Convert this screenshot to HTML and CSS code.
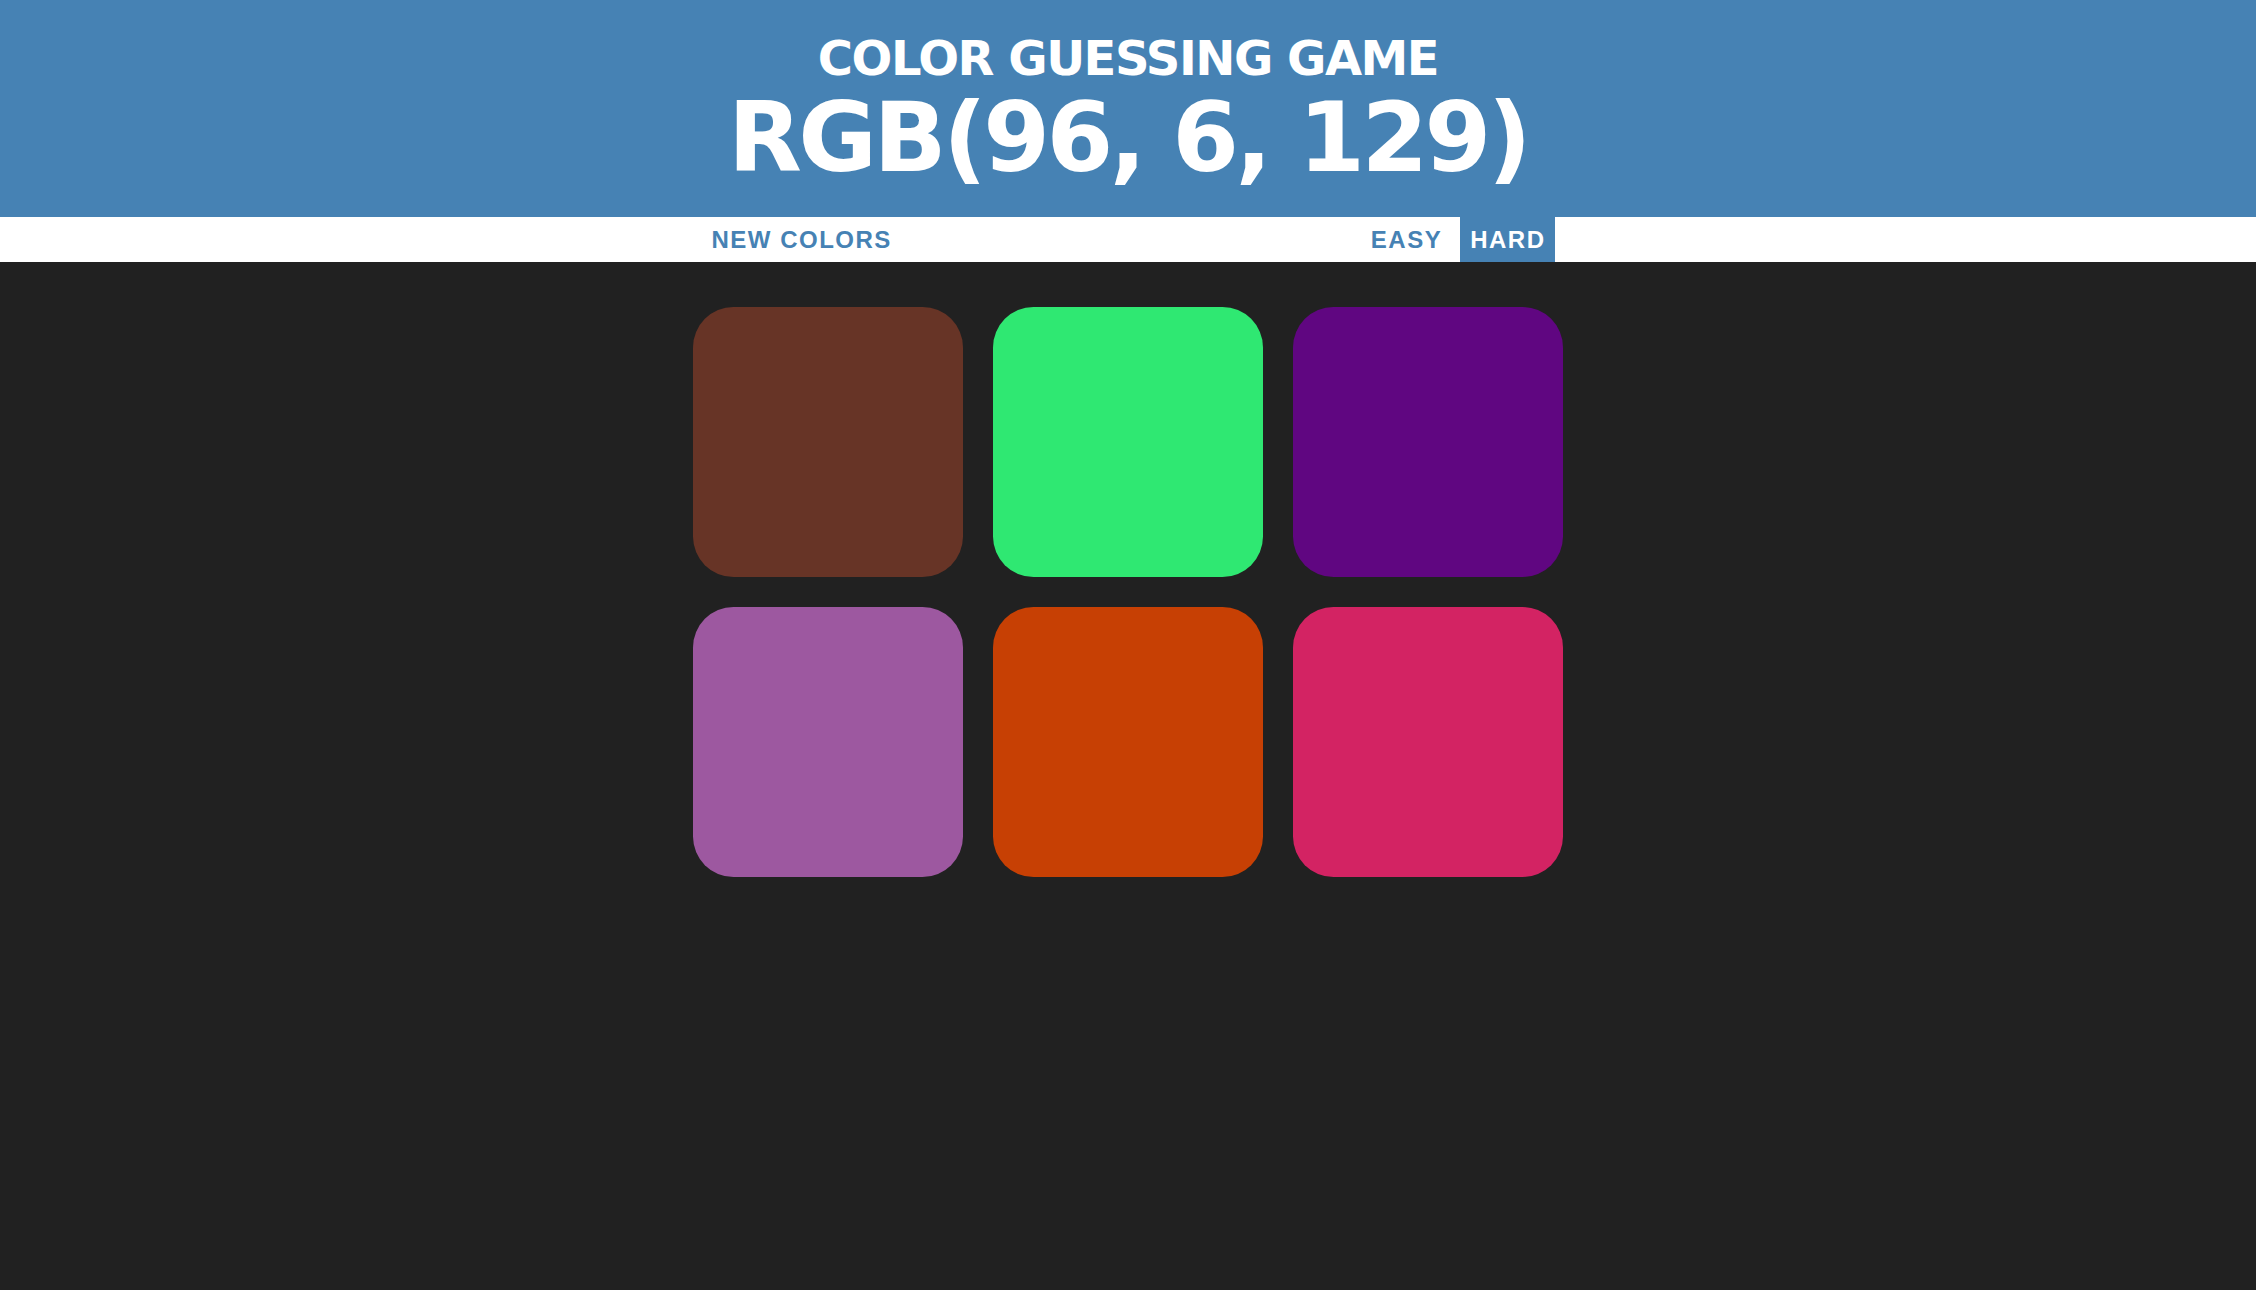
FILE: index.html
```html
<!DOCTYPE html>
<html lang="en">
<head>
<meta charset="utf-8">
<title>Color Guessing Game</title>
<link rel="stylesheet" href="styles.css">
</head>
<body>
  <header class="banner">
    <div class="title">Color Guessing Game</div>
    <div class="color-display">RGB(96, 6, 129)</div>
  </header>
  <nav class="stripe">
    <div class="stripe-inner">
      <button class="btn">New Colors</button>
      <div class="modes">
        <button class="btn">Easy</button>
        <button class="btn selected">Hard</button>
      </div>
    </div>
  </nav>
  <main class="board">
    <div class="square sq-brown"></div>
    <div class="square sq-green"></div>
    <div class="square sq-purple"></div>
    <div class="square sq-lilac"></div>
    <div class="square sq-orange"></div>
    <div class="square sq-pink"></div>
  </main>
</body>
</html>
```

FILE: styles.css
```css
html, body {
  margin: 0;
  padding: 0;
}
body {
  background: #212121;
  min-height: 1290px;
  font-family: "DejaVu Sans", Verdana, sans-serif;
}
.banner {
  background: #4682b4;
  color: #ffffff;
  text-align: center;
  text-transform: uppercase;
  font-weight: bold;
  padding: 32px 0 26px;
}
.title {
  font-size: 48px;
  line-height: 53px;
  letter-spacing: -1.5px;
}
.color-display {
  font-size: 96px;
  line-height: 106px;
  letter-spacing: -3.6px;
}
.stripe {
  background: #ffffff;
  height: 45px;
}
.stripe-inner {
  width: 853px;
  height: 100%;
  margin: 0 auto;
  display: flex;
  justify-content: space-between;
  align-items: stretch;
}
.modes {
  display: flex;
  gap: 9px;
}
.btn {
  border: none;
  background: none;
  margin: 0;
  padding: 0 9px 0 10px;
  height: 100%;
  font-family: "Liberation Sans", Arial, sans-serif;
  font-size: 24px;
  font-weight: bold;
  letter-spacing: 1.5px;
  text-transform: uppercase;
  color: #4682b4;
}
.btn.selected {
  background: #4682b4;
  color: #ffffff;
}
.board {
  width: 870px;
  margin: 45px auto 0;
  display: grid;
  grid-template-columns: repeat(3, 270px);
  grid-auto-rows: 270px;
  gap: 30px;
}
.square {
  border-radius: 15%;
}
.sq-brown { background: #673426; }
.sq-green { background: #2fe872; }
.sq-purple { background: #600681; }
.sq-lilac { background: #9d58a0; }
.sq-orange { background: #c74004; }
.sq-pink { background: #d32363; }
```
